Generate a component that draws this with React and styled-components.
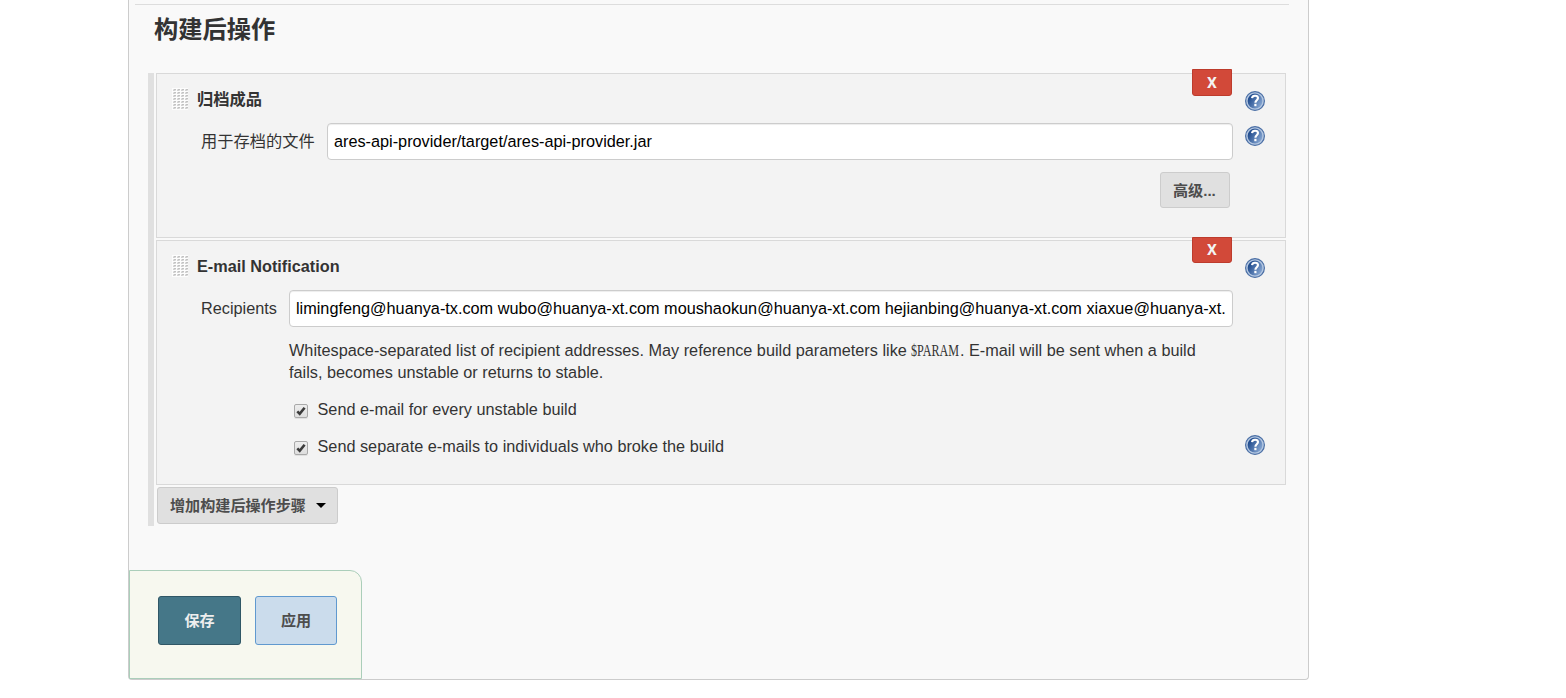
import React from "react";
import styled, { createGlobalStyle } from "styled-components";

const Global = createGlobalStyle`
  * { box-sizing: border-box; }
  body {
    margin: 0;
    background: #fff;
    color: #333;
    font-family: "Liberation Sans", "Noto Sans CJK SC", sans-serif;
    font-size: 16.25px;
  }
`;

const Panel = styled.main`
  width: 1181px;
  height: 680px;
  margin-left: 128px;
  display: flex;
  flex-direction: column;
  background: #f9f9f9;
  border: 1px solid #ccc;
  border-top: 0;
  border-radius: 0 0 4px 4px;
`;

const Divider = styled.div`
  height: 1px;
  flex: none;
  margin: 4px 19px 0 6px;
  background: #ddd;
`;

const Heading = styled.h2`
  margin: 10px 0 0 25px;
  height: 58px;
  font-size: 24.25px;
  line-height: 29px;
`;

const Steps = styled.section`
  height: 453px;
  width: 1138px;
  margin-left: 19px;
  padding-left: 2px;
  border-left: 6px solid #e0e0e0;
  display: flex;
  flex-direction: column;
  align-items: flex-start;
  gap: 2px;
`;

const Card = styled.article`
  position: relative;
  width: 1130px;
  height: ${(p) => p.$height}px;
  flex: none;
  padding: 14px 20px 0 15px;
  background: #f3f3f3;
  border: 1px solid #d9d9d9;
`;

const DeleteButton = styled.button`
  position: absolute;
  top: ${(p) => p.$top}px;
  right: 53px;
  width: 40px;
  height: ${(p) => p.$height}px;
  padding: 0;
  color: #f3f3f3;
  background: #d24939;
  border: 1px solid #bd3b2c;
  border-radius: 0 0 3px 3px;
  font: bold 15.5px Roboto, sans-serif;
  line-height: 22px;
`;

const Row = styled.div`
  display: flex;
  align-items: flex-start;
`;

const TitleRow = styled(Row)`
  height: 35px;
`;

const Title = styled.b`
  flex: 1;
  margin-left: 9px;
  line-height: 22px;
`;

const HelpSlot = styled.span`
  width: 20px;
  height: 20px;
  flex: none;
  margin-top: ${(p) => p.$top ?? 3}px;
`;

const FieldRow = styled(Row)`
  padding-left: 29px;
`;

const Label = styled.label`
  width: ${(p) => p.$width}px;
  flex: none;
  line-height: 37px;
  white-space: nowrap;
`;

const TextInput = styled.input`
  flex: 1;
  min-width: 0;
  height: 37px;
  margin-right: 12px;
  padding: 0 6px 1px;
  color: #000;
  background: #fff;
  border: 1px solid #ccc;
  border-radius: 4px;
  box-shadow: inset 0 1px 1px rgba(0, 0, 0, 0.075);
  font: 16.25px "Liberation Sans", sans-serif;
`;

const GreyButton = styled.button`
  display: flex;
  align-items: center;
  justify-content: space-between;
  width: ${(p) => p.$width}px;
  height: ${(p) => p.$height}px;
  flex: none;
  margin-left: ${(p) => p.$indent || 0}px;
  padding: 0 11px 0 12px;
  color: #4d4d4d;
  background: #e0e0e0;
  border: 1px solid #ccc;
  border-radius: 3px;
  font: bold 15.1px "Liberation Sans", "Noto Sans CJK SC", sans-serif;
  white-space: nowrap;
`;

const ButtonText = styled.span`
  padding-bottom: ${(p) => p.$lift}px;
`;

const AdvancedRow = styled.div`
  display: flex;
  justify-content: flex-end;
  padding: 12px 35px 0 0;
`;

const Description = styled.p`
  margin: 12px 0 0 117px;
  line-height: 22px;
`;

const Line = styled.span`
  display: block;
  height: 22px;
  white-space: pre;
`;

const CodeBox = styled.span`
  display: inline-block;
  width: 48.7px;
  height: 22px;
  vertical-align: top;
`;

const Code = styled.code`
  display: inline-block;
  transform: scaleX(0.745);
  transform-origin: 0 50%;
  font-family: "Liberation Serif", serif;
  font-size: 16.25px;
`;

const Options = styled.div`
  display: flex;
  flex-direction: column;
  gap: 15px;
  padding: 16px 0 0 122px;
`;

const Option = styled(Row)`
  height: 22px;
  line-height: 20px;
`;

const OptionText = styled.span`
  flex: 1;
  margin-left: 9.5px;
`;

const CheckBox = styled.span`
  width: 14px;
  height: 14px;
  flex: none;
  margin-top: 5px;
  display: grid;
  place-items: center;
  border: 1px solid #a9a9a9;
  border-radius: 2px;
  background: linear-gradient(#ededed, #dedede);
  box-shadow: 0 1px 0 rgba(0, 0, 0, 0.08);
`;

const ActionBar = styled.footer`
  width: 233px;
  height: 109px;
  margin-top: 44px;
  padding: 25px 0 0 28px;
  display: flex;
  gap: 14px;
  background: #f7f8ef;
  border: 1px solid #abceba;
  border-top-right-radius: 12px;
`;

const ActionButton = styled.button`
  width: ${(p) => (p.$primary ? 83 : 82)}px;
  height: 49px;
  padding: 0 0 3px;
  color: ${(p) => (p.$primary ? "#eee" : "#4d4d4d")};
  background: ${(p) => (p.$primary ? "#457788" : "#cbdcec")};
  border: 1px solid ${(p) => (p.$primary ? "#305766" : "#6099cf")};
  border-radius: 3px;
  font: bold 15.1px "Noto Sans CJK SC", sans-serif;
`;

function Grip() {
  const dots = [];
  for (let row = 0; row < 7; row++)
    for (let col = 0; col < 4; col++) {
      const x = 1 + col * 4;
      const y = 1 + row * 3;
      dots.push(
        <g key={`${col}-${row}`}>
          <rect x={x} y={y} width="1" height="1" fill="#e2e2e2" />
          <rect x={x + 1} y={y} width="2" height="1" fill="#c2c2c2" />
          <rect x={x} y={y + 1} width="2" height="1" fill="#d2d2d2" />
          <rect x={x + 2} y={y + 1} width="1" height="1" fill="#e2e2e2" />
        </g>
      );
    }
  return (
    <svg width="16" height="22" viewBox="0 0 16 22" shapeRendering="crispEdges">
      <rect width="16" height="22" fill="#fdfdfd" />
      {dots}
    </svg>
  );
}

function Help({ top }) {
  return (
    <HelpSlot $top={top}>
      <svg width="20" height="20" viewBox="0 0 20 20" display="block">
        <defs>
          <linearGradient id="helpFill" x1="0" y1="0.2" x2="1" y2="0.8">
            <stop offset="0.1" stopColor="#1f4a8c" />
            <stop offset="0.95" stopColor="#86a6d2" />
          </linearGradient>
        </defs>
        <circle cx="10" cy="10" r="9.4" fill="#b4c7e1" stroke="#4b6fa5" strokeWidth="1.2" />
        <circle cx="10" cy="10" r="7.4" fill="url(#helpFill)" />
        <path
          d="M7 7.2C7.2 5.5 8.4 4.7 10 4.7c1.8 0 3 .9 3 2.4 0 2.1-2.6 2.2-2.6 4.6"
          fill="none"
          stroke="#fff"
          strokeWidth="2.1"
        />
        <rect x="9.3" y="12.8" width="2.2" height="2.4" fill="#fff" />
      </svg>
    </HelpSlot>
  );
}

function Check() {
  return (
    <CheckBox role="checkbox" aria-checked="true">
      <svg width="12" height="12" viewBox="0 0 12 12" display="block">
        <path d="M2.3 6.4 4.7 8.8 9.6 2.7" fill="none" stroke="#3b3b3b" strokeWidth="2.6" />
      </svg>
    </CheckBox>
  );
}

export default function App() {
  return (
    <>
      <Global />
      <Panel>
        <Divider />
        <Heading>构建后操作</Heading>
        <Steps>
          <Card $height={165}>
            <DeleteButton $top={-5} $height={27}>X</DeleteButton>
            <TitleRow>
              <Grip />
              <Title>归档成品</Title>
              <Help />
            </TitleRow>
            <FieldRow>
              <Label $width={126}>用于存档的文件</Label>
              <TextInput defaultValue="ares-api-provider/target/ares-api-provider.jar" />
              <Help />
            </FieldRow>
            <AdvancedRow>
              <GreyButton $width={70} $height={36}>
                <ButtonText $lift={2}>高级...</ButtonText>
              </GreyButton>
            </AdvancedRow>
          </Card>
          <Card $height={245}>
            <DeleteButton $top={-4} $height={26}>X</DeleteButton>
            <TitleRow>
              <Grip />
              <Title>E-mail Notification</Title>
              <Help />
            </TitleRow>
            <FieldRow>
              <Label $width={88}>Recipients</Label>
              <TextInput defaultValue="limingfeng@huanya-tx.com wubo@huanya-xt.com moushaokun@huanya-xt.com hejianbing@huanya-xt.com xiaxue@huanya-xt." />
              <HelpSlot />
            </FieldRow>
            <Description>
              <Line>
                {"Whitespace-separated list of recipient addresses. May reference build parameters like "}
                <CodeBox><Code>$PARAM</Code></CodeBox>
                {". E-mail will be sent when a build"}
              </Line>
              <Line>fails, becomes unstable or returns to stable.</Line>
            </Description>
            <Options>
              <Option>
                <Check />
                <OptionText>Send e-mail for every unstable build</OptionText>
              </Option>
              <Option>
                <Check />
                <OptionText>Send separate e-mails to individuals who broke the build</OptionText>
                <Help top={-1} />
              </Option>
            </Options>
          </Card>
          <GreyButton $width={181} $height={37} $indent={1}>
            <ButtonText $lift={4}>增加构建后操作步骤</ButtonText>
            <svg width="10" height="5" viewBox="0 0 10 5">
              <path d="M0 0H10L5 5Z" fill="#000" />
            </svg>
          </GreyButton>
        </Steps>
        <ActionBar>
          <ActionButton $primary>保存</ActionButton>
          <ActionButton>应用</ActionButton>
        </ActionBar>
      </Panel>
    </>
  );
}
